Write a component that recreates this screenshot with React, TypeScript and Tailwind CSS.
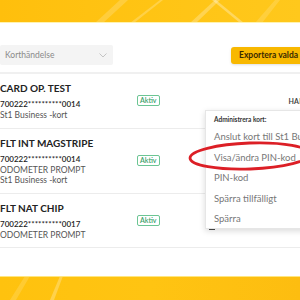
import React from "react";

type Card = {
  title: string;
  number: string;
  lines: string[];
};

const cards: Card[] = [
  { title: "CARD OP. TEST", number: "700222**********0014", lines: ["St1 Business -kort"] },
  {
    title: "FLT INT MAGSTRIPE",
    number: "700222**********0014",
    lines: ["ODOMETER PROMPT", "St1 Business -kort"],
  },
  { title: "FLT NAT CHIP", number: "700222**********0017", lines: ["ODOMETER PROMPT"] },
];

const menuItems = [
  "Anslut kort till St1 Business",
  "Visa/ändra PIN-kod",
  "PIN-kod",
  "Spärra tillfälligt",
  "Spärra",
];

const Rays = () => (
  <svg className="absolute inset-0 h-full w-full" viewBox="0 0 300 24" preserveAspectRatio="none">
    <polygon points="95,24 120,0 128,0 103,24" fill="#ffffff" opacity="0.18" />
    <polygon points="130,24 160,0 163,0 134,24" fill="#ffffff" opacity="0.22" />
    <polygon points="190,24 215,0 220,0 196,24" fill="#ffffff" opacity="0.25" />
    <polygon points="212,0 240,24 244,24 216,0" fill="#ffffff" opacity="0.3" />
    <polygon points="255,24 275,0 280,0 262,24" fill="#ffffff" opacity="0.15" />
  </svg>
);

// the menu sits over the action label of the lower rows, so only the first one shows it
const CardRow = ({ card, showAction }: { card: Card; showAction: boolean }) => (
  <div className="flex items-center border-b border-[#ececec] pt-[7px] pb-[7px]">
    <div className="w-[137px] shrink-0">
      <div className="text-[10px] font-bold leading-[14px] text-[#222]">{card.title}</div>
      <div className="mt-[4px] text-[8px] font-semibold leading-[11px] text-[#222]">{card.number}</div>
      {card.lines.map((l) => (
        <div key={l} className="text-[8.5px] leading-[10.5px] text-[#555]">
          {l}
        </div>
      ))}
    </div>
    <span className="rounded-[2px] border border-[#6cc594] px-[2px] text-[7px] leading-[9px] font-semibold text-[#3a9f6a]">
      Aktiv
    </span>
    {showAction && (
      <span className="ml-[129px] whitespace-nowrap text-[7px] font-bold tracking-wide text-[#444]">HANTERA</span>
    )}
  </div>
);

export default function App() {
  return (
    <div
      className="relative flex h-[300px] w-[300px] flex-col overflow-hidden bg-white"
      style={{ fontFamily: "Lato, 'Open Sans', sans-serif" }}
    >
      <div className="relative h-[23px] shrink-0 bg-gradient-to-r from-[#ffbf0c] via-[#ffc414] to-[#ffc81c]">
        <Rays />
        <div className="absolute bottom-0 left-0 right-0 h-[1px] bg-[#fff3b0]" />
      </div>

      <div className="flex-1">
        <div className="flex items-center justify-between pt-[22px] pb-[7px]">
          <div className="flex h-[20px] w-[113px] items-center justify-between rounded-[2px] bg-[#f4f4f4] pl-[5px] pr-[6px]">
            <span className="text-[8.5px] text-[#8a8a8a]">Korthändelse</span>
            <svg width="8" height="5" viewBox="0 0 8 5" fill="none">
              <path d="M0.5 0.5 L4 4 L7.5 0.5" stroke="#c4c4c4" strokeWidth="1" />
            </svg>
          </div>
          <div className="-mr-[11px] flex h-[17px] w-[80px] shrink-0 items-center overflow-hidden rounded-[3px] bg-[#f8b800] pl-[8px] shadow-sm">
            <span className="whitespace-nowrap text-[8.5px] font-bold text-[#3a2a00]">Exportera valda kort</span>
          </div>
        </div>
        <div className="h-[2px] bg-[#f0f0f0]" />
        {cards.map((c, i) => (
          <CardRow key={c.title} card={c} showAction={i === 0} />
        ))}
      </div>

      <div className="relative h-[24px] shrink-0 bg-gradient-to-r from-[#ffc20e] via-[#ffc412] to-[#fdbd10]">
        <svg className="absolute inset-0 h-full w-full" viewBox="0 0 300 24" preserveAspectRatio="none">
          <polygon points="10,24 25,0 30,0 16,24" fill="#ffffff" opacity="0.15" />
          <polygon points="50,24 60,0 63,0 54,24" fill="#ffffff" opacity="0.25" />
        </svg>
        <div className="absolute left-0 right-0 top-0 h-[1px] bg-[#ffe680]" />
      </div>

      <div className="absolute left-[205px] top-[110px] h-[119px] w-[110px] border border-[#e6e6e6] bg-white pt-[4px] pl-[8px] shadow-[0_2px_6px_rgba(0,0,0,0.15)]">
        <div className="text-[6.5px] font-bold leading-[9px] text-[#333]">Administrera kort:</div>
        <div className="mt-[3px]">
          {menuItems.map((m) => (
            <div key={m} className="whitespace-nowrap text-[9.5px] leading-[20.5px] text-[#777]">
              {m}
            </div>
          ))}
        </div>
      </div>
      <div className="absolute left-[209px] top-[229px] h-[1px] w-[6px] bg-[#444]" />

      <svg className="absolute left-[186px] top-[139px]" width="130" height="36" viewBox="0 0 130 36" fill="none">
        <ellipse
          cx="64"
          cy="17"
          rx="60"
          ry="13"
          stroke="#dc1f26"
          strokeWidth="2.8"
          transform="rotate(-2 64 17)"
        />
      </svg>
    </div>
  );
}
